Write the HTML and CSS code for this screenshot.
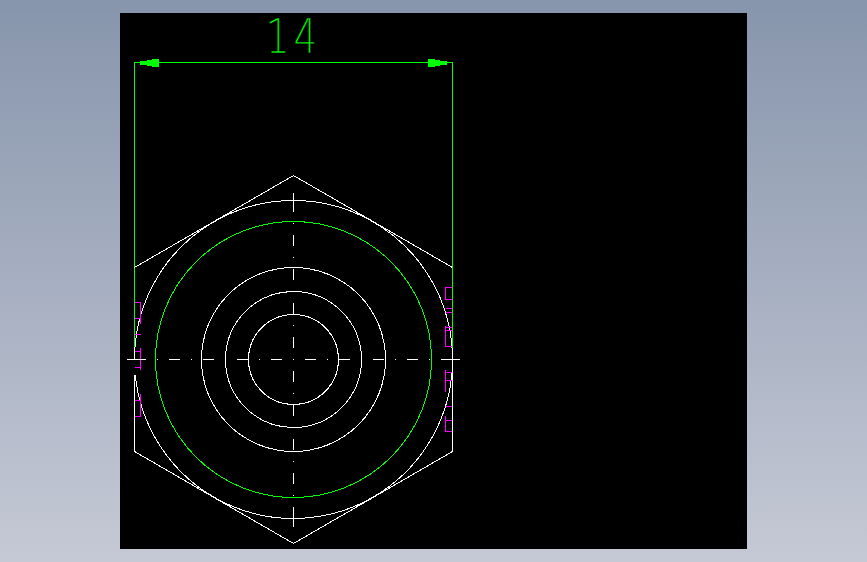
FILE: index.html
```html
<!DOCTYPE html>
<html lang="en">

<head>
    <meta charset="UTF-8">
    <meta name="viewport" content="width=device-width, initial-scale=1.0">
    <title>Hex nut drawing</title>
    <link rel="stylesheet" href="styles.css">
</head>

<body>
    <div class="sheet">
        <svg class="drawing" width="627" height="536" viewBox="120 13 627 536">
            <!-- dimension -->
            <path class="dim" d="M134.5 359V62.5H452.5V360"/>
            <path class="dim-fill" d="M135 62H140V61H147V60H152V59H159V67H152V66H147V65H140V63H135Z"/>
            <path class="dim-fill" d="M452 62H447V61H440V60H435V59H428V67H435V66H440V65H447V63H452Z"/>
            <text class="dim-text" transform="translate(293.5 53) scale(0.78 1)" text-anchor="middle">14</text>

            <!-- body -->
            <path class="part" d="M134.5 375V451.5L293.5 543.5L452.5 451.5V360M452.5 267.5L293.5 175.5L134.5 267.5"/>
            <path class="part" d="M135.26 375A159 159 0 1 0 134.5 359.5"/>
            <circle class="dim" cx="293.5" cy="359.5" r="138"/>
            <circle class="part" cx="293.5" cy="359.5" r="92"/>
            <circle class="part" cx="293.5" cy="359.5" r="68"/>
            <circle class="part" cx="293.5" cy="359.5" r="45"/>

            <!-- weld marks -->
            <path class="mark" d="M135 302.5H140.5V324M135 318.5H140.5M135 334.5H140.5M135 351.5H140.5M140.5 348V370M135 367.5H140.5M135 400.5H140.5M140.5 394V416.5H135"/>
            <path class="mark" d="M452 287.5H445.5V299.5H452M445.5 308.5H452M445.5 312.5H452M445.5 326V347M445.5 327.5H452M445.5 330.5H452M445.5 346.5H452M445.5 370V392M445.5 372.5H452M445.5 380.5H452M445.5 406.5H452M445.5 416V431.5H452M445.5 420.5H452"/>

            <!-- centre lines -->
            <line class="centre" x1="135" y1="359.5" x2="452" y2="359.5"/>
            <line class="centre" x1="293.5" y1="201" x2="293.5" y2="518"/>
            <path class="part" d="M127 359.5H146M441 359.5H460M293.5 193V212M293.5 508V527"/>
        </svg>
    </div>
</body>

</html>
```

FILE: styles.css
```css
body {
    margin: 0;
    height: 562px;
    overflow: hidden;
    background: linear-gradient(to bottom, #8795ac, #c5c9d5);
    font-family: 'DejaVu Sans', sans-serif;
}

.sheet {
    width: 627px;
    height: 536px;
    margin: 13px 0 0 120px;
    background-color: #000;
}

.drawing {
    display: block;
    overflow: visible;
    shape-rendering: crispEdges;
}

.part,
.dim,
.mark,
.centre {
    fill: none;
    stroke-width: 1;
}

.part,
.centre {
    stroke: #fff;
}

.dim {
    stroke: #00ff00;
}

.dim-fill {
    fill: #00ff00;
}

.mark {
    stroke: #ff00ff;
}

.centre {
    stroke-dasharray: 11 11 1 11;
}

/* black stroke over the fill thins the glyphs down to a CAD line */
.dim-text {
    fill: #00ff00;
    stroke: #000;
    stroke-width: 0.6px;
    font-family: 'DejaVu Sans', sans-serif;
    font-weight: 200;
    font-size: 48px;
    letter-spacing: 5px;
}
```
